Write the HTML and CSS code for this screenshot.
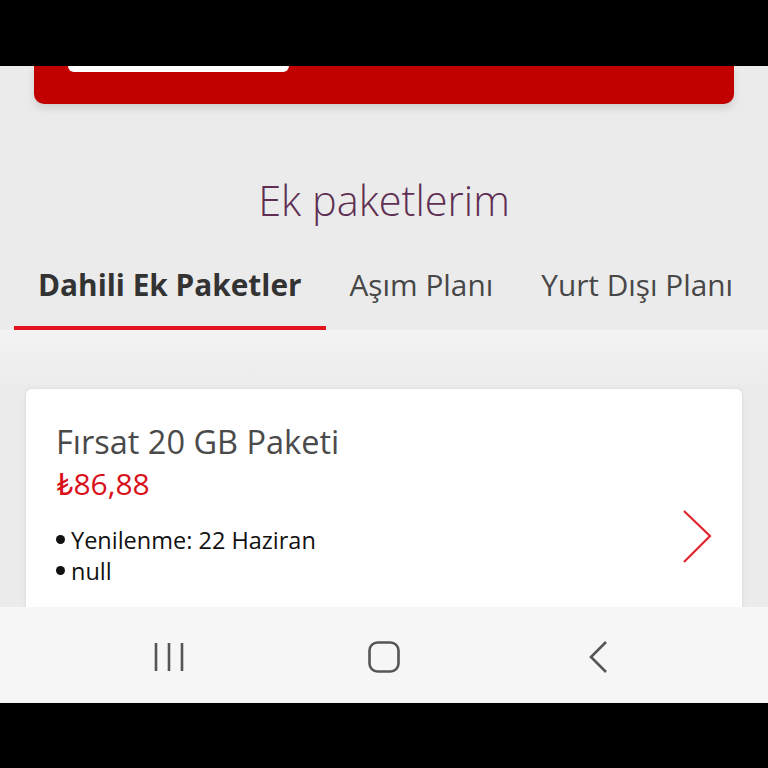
FILE: index.html
```html
<!DOCTYPE html>
<html lang="tr">
<head>
<meta charset="utf-8">
<title>Ek paketlerim</title>
<link rel="stylesheet" href="styles.css">
</head>
<body>
<div class="phone">
  <div class="topbar"></div>
  <main class="screen">
    <div class="hero-wrap">
      <div class="hero"><div class="hero-pill"></div></div>
    </div>
    <h1 class="title">Ek paketlerim</h1>
    <nav class="tabs">
      <div class="tab active">Dahili Ek Paketler</div>
      <div class="tab">Aşım Planı</div>
      <div class="tab">Yurt Dışı Planı</div>
    </nav>
    <section class="content">
      <div class="card">
        <div class="card-info">
          <div class="card-title">Fırsat 20 GB Paketi</div>
          <div class="card-price">₺86,88</div>
          <ul class="card-list">
            <li>Yenilenme: 22 Haziran</li>
            <li>null</li>
          </ul>
        </div>
        <svg class="card-arrow" width="32" height="56" viewBox="0 0 32 56">
          <path d="M2 2 L28 27 L2 53" fill="none" stroke="#e2242c" stroke-width="2.2"/>
        </svg>
      </div>
    </section>
  </main>
  <div class="navbar">
    <svg class="nav-icon" width="40" height="40" viewBox="0 0 40 40">
      <path d="M6 5 V33 M19 5 V33 M32 5 V33" stroke="#555" stroke-width="2.6" fill="none"/>
    </svg>
    <svg class="nav-icon" width="40" height="40" viewBox="0 0 40 40">
      <rect x="5.5" y="4.5" width="29" height="29" rx="8" fill="none" stroke="#555" stroke-width="2.6"/>
    </svg>
    <svg class="nav-icon" width="40" height="40" viewBox="0 0 40 40">
      <path d="M28 4 L13 19 L28 34" fill="none" stroke="#555" stroke-width="2.6"/>
    </svg>
  </div>
  <div class="bottombar"></div>
</div>
</body>
</html>
```

FILE: styles.css
```css
* { box-sizing: border-box; }
html, body { margin: 0; padding: 0; }
body {
  width: 768px;
  height: 768px;
  overflow: hidden;
  background: #000;
  font-family: "Open Sans", "Lato", sans-serif;
}
.phone {
  display: flex;
  flex-direction: column;
  height: 768px;
}
.topbar { height: 66px; background: #000; flex: none; }
.screen {
  height: 541px;
  flex: none;
  overflow: hidden;
  background: #ebebeb;
  display: flex;
  flex-direction: column;
}
.hero-wrap { padding: 0 34px; }
.hero {
  height: 38px;
  background: #c10000;
  border-radius: 0 0 10px 10px;
  box-shadow: 0 4px 8px rgba(0,0,0,0.12);
  padding: 0 34px;
}
.hero-pill {
  width: 221px;
  height: 6px;
  background: #fff;
  border-radius: 0 0 7px 7px;
}
.title {
  margin: 72px 0 0;
  text-align: center;
  font-weight: 300;
  font-size: 41.5px;
  line-height: 48px;
  color: #5e2f52;
}
.tabs {
  display: flex;
  padding: 0 14px;
  margin-top: 33px;
}
.tab {
  padding: 0 24px;
  height: 73px;
  font-size: 29.8px;
  line-height: 56px;
  color: #474747;
  white-space: nowrap;
  border-bottom: 4px solid transparent;
}
.tab.active {
  font-weight: 700;
  color: #333;
  border-bottom-color: #e3141e;
}
.content {
  flex: 1;
  background: linear-gradient(#f3f3f3, #ebebeb 60px);
  padding: 59px 26px 0;
}
.card {
  background: #fff;
  border-radius: 6px 6px 0 0;
  box-shadow: 0 0 4px rgba(0,0,0,0.08);
  height: 260px;
  padding: 33px 28px 0 30px;
  display: flex;
  justify-content: space-between;
  align-items: flex-start;
}
.card-title {
  font-size: 32.5px;
  line-height: 40px;
  color: #4a4a4a;
}
.card-price {
  font-size: 30px;
  line-height: 36px;
  color: #d9111b;
  margin-top: 4px;
}
.card-list {
  list-style: none;
  margin: 23px 0 0;
  padding: 0;
  font-size: 23.5px;
  line-height: 31px;
  color: #111;
}
.card-list li {
  display: flex;
  align-items: center;
  gap: 6px;
}
.card-list li::before {
  content: "";
  width: 9px;
  height: 9px;
  border-radius: 50%;
  background: #111;
  margin-top: -2px;
}
.card-arrow { margin-top: 87px; }
.navbar {
  height: 96px;
  flex: none;
  background: #f6f6f6;
  display: flex;
  justify-content: center;
  align-items: center;
  gap: 174px;
  padding: 6px 0 0;
}
.bottombar { flex: 1; background: #000; }
```
